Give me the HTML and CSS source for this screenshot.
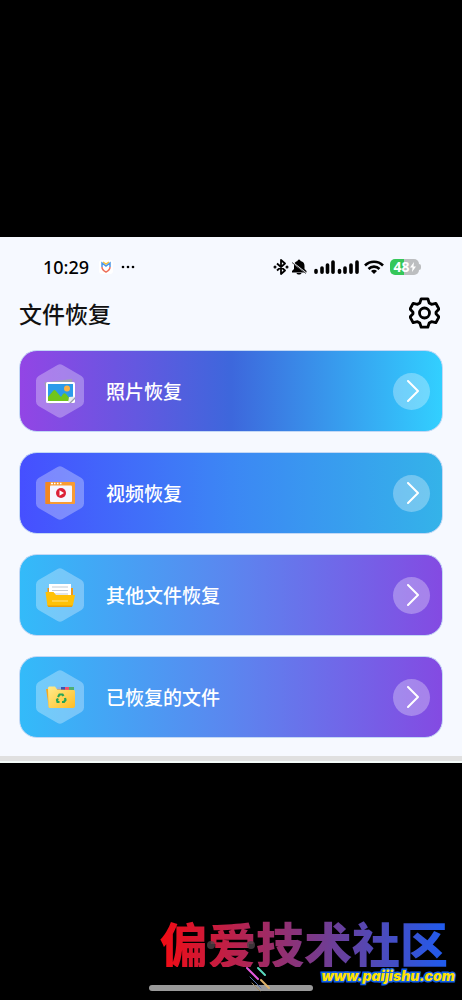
FILE: index.html
```html
<!DOCTYPE html>
<html lang="zh-CN">
<head>
  <meta charset="UTF-8" />
  <meta name="viewport" content="width=device-width, initial-scale=1.0" />
  <title>文件恢复</title>
  <link rel="stylesheet" href="styles.css">
</head>
<body>
  <main class="screen">
    <div class="status-bar">
      <span class="time">10:29</span>
      <svg class="app-badge" width="14" height="14" viewBox="0 0 14 14" fill="none" stroke-width="1.5">
        <rect width="14" height="14" rx="3" fill="#fff"/>
        <path d="M4 2l3 2 3-2" stroke="#f6c136"/>
        <path d="M3 7V3l4 3 4-3v4" stroke="#4a96e8"/>
        <path d="M3 7c0 3 2 4 4 5 2-1 4-2 4-5" stroke="#ee705b"/>
      </svg>
      <svg class="more" width="14" height="4" viewBox="0 0 14 4"><circle cx="2" cy="2" r="1.300"/><circle cx="7" cy="2" r="1.300"/><circle cx="12" cy="2" r="1.300"/></svg>
      <div class="status-icons">
        <svg width="16" height="16" viewBox="0 0 16 16" fill="none" stroke="#000" stroke-width="1.800" stroke-linejoin="round">
          <path d="M4 4.500l8 7-4 3.500V1l4 3.500-8 7"/>
          <circle cx="2" cy="8" r=".6"/><circle cx="14" cy="8" r=".6"/>
        </svg>
        <svg class="bell" width="16" height="16" viewBox="0 0 16 16">
          <path d="M6.500 2a1.500 1.500 0 0 1 3 0c3 .7 4 2.500 4 5v3l2 2v1.500H1V12l2-2V7c0-2.500 1-4.300 3.500-5zM5.500 14h5c-.5 2-4.500 2-5 0z"/>
          <path d="M1 3l14 11" stroke="#f6f9ff" stroke-width="1.500"/>
          <path d="M1 3.500l14 11" stroke="#444" stroke-width="1"/>
        </svg>
        <svg class="signal" width="45" height="14" viewBox="0 0 45 14" stroke="#000" stroke-width="3.600" stroke-linecap="round">
          <path d="M2 10.500v1.700M8 8v4.200M13.500 5v7.200M19 2v10.200M25.500 10.500v1.700M31 8v4.200M37 5v7.200M43 2v10.200"/>
        </svg>
        <svg class="wifi" width="20" height="15" viewBox="0 0 20 15" fill="none" stroke="#000" stroke-width="2.600">
          <path d="M1 5.500c5-5 13-5 18 0M4.500 9c3.200-3.200 7.800-3.200 11 0"/>
          <path d="M10 14l-3-3c1.700-1.600 4.300-1.600 6 0z" fill="#000" stroke="none"/>
        </svg>
        <div class="battery">
          <span>48</span>
          <svg width="6" height="10" viewBox="0 0 6 10"><path d="M4 0L0 5.500h2.500L2 10l4-5.500H3.500z" fill="#fff"/></svg>
        </div>
      </div>
    </div>

    <header class="header">
      <h1>文件恢复</h1>
      <button class="settings" aria-label="设置">
        <svg width="31" height="32" viewBox="0 0 31 32" fill="none" stroke="#000" stroke-width="2.800" stroke-linejoin="round">
          <path d="M12.200 1.800h6.600l1.400 4.200 2.300 1.300 4.300-1L30 12l-3 3.200v1.600l3 3.200-3.200 5.700-4.300-1-2.300 1.300-1.400 4.200h-6.600L10.800 26l-2.300-1.300-4.300 1L1 20l3-3.200v-1.600L1 12l3.200-5.700 4.300 1L10.800 6z"/>
          <circle cx="15.500" cy="16" r="5"/>
        </svg>
      </button>
    </header>

    <div class="list">
      <button class="card photo">
        <span class="hexagon">
          <svg width="48" height="54" viewBox="0 0 48 54">
            <path class="hex" d="M21.500 1q2.500-1.500 5 0L45.500 12Q48 13.500 48 16.500v21q0 3-2.500 4.500L26.500 53q-2.500 1.500-5 0L2.500 42Q0 40.500 0 37.500v-21Q0 13.500 2.500 12z"/>
            <path d="M8.500 18.500L36 15l3 22-26 3z" fill="#a0a3ae"/>
            <rect x="10" y="18" width="29" height="21" rx="1.500" fill="#fff"/>
            <path d="M12 20h25v14l-4 3H12z" fill="#2c9bea"/>
            <circle cx="31" cy="24.500" r="3" fill="#fbb243"/>
            <path d="M12 33l5-6q1.500-2 3 0l5 6 2-3q1.500-1.500 3 0l4 5-1 2H12z" fill="#70c51c"/>
            <path d="M32 39l1-6 6-.5z" fill="#e8eced"/>
            <path d="M33 39l6-6v2l-4 4z" fill="#969da9"/>
          </svg>
        </span>
        <span class="label">照片恢复</span>
        <span class="arrow"><svg width="12" height="22" viewBox="0 0 12 22"><path d="M1 1l10 10L1 21"/></svg></span>
      </button>

      <button class="card video">
        <span class="hexagon">
          <svg width="48" height="54" viewBox="0 0 48 54">
            <path class="hex" d="M21.500 1q2.500-1.500 5 0L45.500 12Q48 13.500 48 16.500v21q0 3-2.500 4.500L26.500 53q-2.500 1.500-5 0L2.500 42Q0 40.500 0 37.500v-21Q0 13.500 2.500 12z"/>
            <rect x="9.500" y="16" width="29.500" height="22" rx="1" fill="#f99b32"/>
            <path d="M9.500 16H14v22H9.500z" fill="#f38721"/>
            <rect x="14" y="19.500" width="22" height="16.500" rx="1" fill="#f5f6ff"/>
            <path d="M15 17.500h2M18 17.500h1.500M21 17.500h1.500M24 17.500h1.500" stroke="#fff" stroke-width="1.300"/>
            <circle cx="25" cy="27" r="5" fill="#dc2138"/>
            <path d="M23.500 24.200l4.500 2.800-4.500 2.800z" fill="#fff"/>
          </svg>
        </span>
        <span class="label">视频恢复</span>
        <span class="arrow"><svg width="12" height="22" viewBox="0 0 12 22"><path d="M1 1l10 10L1 21"/></svg></span>
      </button>

      <button class="card other">
        <span class="hexagon">
          <svg width="48" height="54" viewBox="0 0 48 54">
            <path class="hex" d="M21.500 1q2.500-1.500 5 0L45.500 12Q48 13.500 48 16.500v21q0 3-2.500 4.500L26.500 53q-2.500 1.500-5 0L2.500 42Q0 40.500 0 37.500v-21Q0 13.500 2.500 12z"/>
            <path d="M11.500 20H37v12H11.500z" fill="#ee9819"/>
            <path d="M13 16h22v14H13z" fill="#fff"/>
            <path d="M16 19h16M16 22.500h16M16 26h16" stroke="#c4cbd3"/>
            <path d="M9.500 24h8l2.500 3h19L37 37q-.2 1.500-2 1.500H13q-1.500 0-1.700-1.500z" fill="#ffc107"/>
            <path d="M11.200 37.500h25.500l-1 1.500H12.500z" fill="#e99d08"/>
            <path d="M16 33h16" stroke="#ffe48c"/>
          </svg>
        </span>
        <span class="label">其他文件恢复</span>
        <span class="arrow"><svg width="12" height="22" viewBox="0 0 12 22"><path d="M1 1l10 10L1 21"/></svg></span>
      </button>

      <button class="card recovered">
        <span class="hexagon">
          <svg width="48" height="54" viewBox="0 0 48 54">
            <defs>
              <linearGradient id="folder" x1="0" y1="0" x2="1" y2="1"><stop stop-color="#ffec8c"/><stop offset="1" stop-color="#ffbd25"/></linearGradient>
            </defs>
            <path class="hex" d="M21.500 1q2.500-1.500 5 0L45.500 12Q48 13.500 48 16.500v21q0 3-2.500 4.500L26.500 53q-2.500 1.500-5 0L2.500 42Q0 40.500 0 37.500v-21Q0 13.500 2.500 12z"/>
            <path d="M21 17h4v5h-4z" fill="#8bb8ed"/>
            <path d="M25 17h4v5h-4z" fill="#3755b5"/>
            <path d="M29 17h4v5h-4z" fill="#f34f6d"/>
            <path d="M33 17h5v5h-5z" fill="#4eae73"/>
            <path d="M10 19l3 19 24-1V20z" fill="#f8a91d"/>
            <path d="M12 18q0-1.500 1.500-1.500h5.500l2.500 3.500H38q1 0 1 1.500V36q0 2-2 2H14q-1.500 0-1.500-1.500z" fill="url(#folder)"/>
            <g fill="none" stroke="#24a457" stroke-width="2.200">
              <path d="M22 27l1.500-2.500h3l1 1.500M29 28l.5 2-1.500 2h-2M23.500 32h-2L21 30l1-1.500"/>
            </g>
          </svg>
        </span>
        <span class="label">已恢复的文件</span>
        <span class="arrow"><svg width="12" height="22" viewBox="0 0 12 22"><path d="M1 1l10 10L1 21"/></svg></span>
      </button>
    </div>
    <div class="divider"></div>
  </main>

  <!-- page dots, home bar and the site mark at the bottom of the screen -->
  <div class="overlay">
    <div class="home-bar"></div>
    <div class="watermark">
      <strong class="site-name">偏爱技术社区</strong>
      <span class="site-url">www.paijishu.com</span>
    </div>
    <div class="dots"><i></i><i></i></div>
    <svg class="sparks" width="26" height="26" viewBox="0 0 26 26" fill="none" stroke-linecap="round">
      <path d="M2 2l11 11" stroke="#e65adf" stroke-width="2"/>
      <path d="M13 2l7 7" stroke="#5ad9bd" stroke-width="2"/>
      <path d="M16 14l8 8" stroke="#e0b46a" stroke-width="2"/>
      <path d="M5 11l11 11" stroke="#526da8"/>
      <path d="M7 17l8 8" stroke="#a58d62"/>
    </svg>
  </div>
</body>
</html>
```
FILE: styles.css
```css
* {
  margin: 0;
  padding: 0;
  box-sizing: border-box;
}

body {
  background: #000;
  color: #111;
  min-height: 100vh;
  display: flex;
  flex-direction: column;
  justify-content: center;
  position: relative;
  font-family: "Noto Sans", "Noto Sans CJK SC", sans-serif;
}

svg {
  display: block;
  flex-shrink: 0;
}

button {
  border: none;
  background: none;
  font: inherit;
  cursor: pointer;
}

.screen {
  background: #f6f9ff;
}

.status-bar {
  height: 60px;
  padding: 0 43px;
  display: flex;
  align-items: center;
}

.time {
  font-size: 18px;
  font-weight: 500;
  line-height: 24px;
  color: #000;
}

.app-badge {
  margin-left: 10px;
}

.more {
  margin-left: 8px;
}

.status-icons {
  margin-left: auto;
  display: flex;
  align-items: center;
}

.bell {
  margin-left: 2px;
}

.signal {
  margin-left: 7px;
}

.wifi {
  margin-left: 5px;
}

.battery {
  position: relative;
  margin-left: 6px;
  width: 29px;
  height: 16px;
  border-radius: 5px;
  background: linear-gradient(90deg, #35c759 48%, #bcbec0 48%);
  display: flex;
  align-items: center;
  justify-content: center;
  color: #fff;
  font-size: 14px;
  font-weight: 700;
  line-height: 16px;
}

.battery::after {
  content: "";
  position: absolute;
  right: -2px;
  top: 5px;
  width: 2px;
  height: 6px;
  border-radius: 0 2px 2px 0;
  background: #bcbec0;
}

.header {
  display: flex;
  align-items: center;
  justify-content: space-between;
  height: 32px;
  padding: 0 22px 0 19px;
}

.header h1 {
  font-family: "Noto Sans CJK SC", sans-serif;
  font-size: 23px;
  font-weight: 500;
  line-height: 32px;
}

.list {
  display: flex;
  flex-direction: column;
  gap: 20px;
  padding: 21px 19px 18px;
}

.card {
  height: 82px;
  display: flex;
  align-items: center;
  padding: 0 12px 0 16px;
  border: 1px solid #c3d8f5;
  border-radius: 18px;
  background-origin: border-box;
  color: #fff;
  text-align: left;
}

.photo {
  background-image: linear-gradient(90deg, #9345e5, #3d67dc 50%, #32d0ff);
}

.video {
  background-image: linear-gradient(90deg, #464fff, #3c87f4 50%, #34b3e9);
}

.other,
.recovered {
  background-image: linear-gradient(90deg, #33bbf9, #5b86ef 50%, #844ae2);
}

.hex {
  fill: rgba(255, 255, 255, 0.3);
}

.label {
  flex: 1;
  margin-left: 22px;
  font-family: "Noto Sans CJK SC", sans-serif;
  font-size: 19px;
  font-weight: 500;
  line-height: 28px;
}

.arrow {
  width: 37px;
  height: 37px;
  border-radius: 50%;
  background: rgba(255, 255, 255, 0.3);
  display: flex;
  align-items: center;
  justify-content: center;
  padding-left: 2px;
}

.arrow path {
  fill: none;
  stroke: #fff;
  stroke-width: 2;
  stroke-linecap: round;
  stroke-linejoin: round;
}

.divider {
  height: 7px;
  background: #f4fbf8;
  border-top: 5px solid #e0e0e0;
}

.overlay {
  position: absolute;
  left: 0;
  right: 0;
  bottom: 0;
  height: 84px;
}

.dots {
  position: absolute;
  left: 50%;
  bottom: 51px;
  margin-left: -24px;
  display: flex;
  gap: 32px;
}

.dots i {
  width: 8px;
  height: 8px;
  border-radius: 50%;
  background: rgba(75, 65, 70, 0.8);
}

.home-bar {
  position: absolute;
  left: 50%;
  bottom: 9px;
  width: 164px;
  height: 6px;
  margin-left: -82px;
  border-radius: 3px;
  background: #999;
}

.watermark {
  position: absolute;
  right: 7px;
  bottom: 15px;
  display: flex;
  flex-direction: column;
  align-items: flex-end;
}

.site-name {
  margin-right: 7px;
  font-family: "Noto Sans CJK SC", sans-serif;
  font-size: 48px;
  font-weight: 900;
  line-height: 50px;
  color: transparent;
  background: linear-gradient(90deg, #f30b13, #773a8c 55%, #1e5cf0);
  -webkit-background-clip: text;
  background-clip: text;
}

.site-url {
  font-family: Inter, sans-serif;
  font-size: 14px;
  font-weight: 900;
  font-style: italic;
  line-height: 18px;
  color: #ffe100;
  -webkit-text-stroke: 3px #1261e8;
  paint-order: stroke fill;
}

.sparks {
  position: absolute;
  left: 50%;
  bottom: 8px;
  margin-left: 14px;
}
```
